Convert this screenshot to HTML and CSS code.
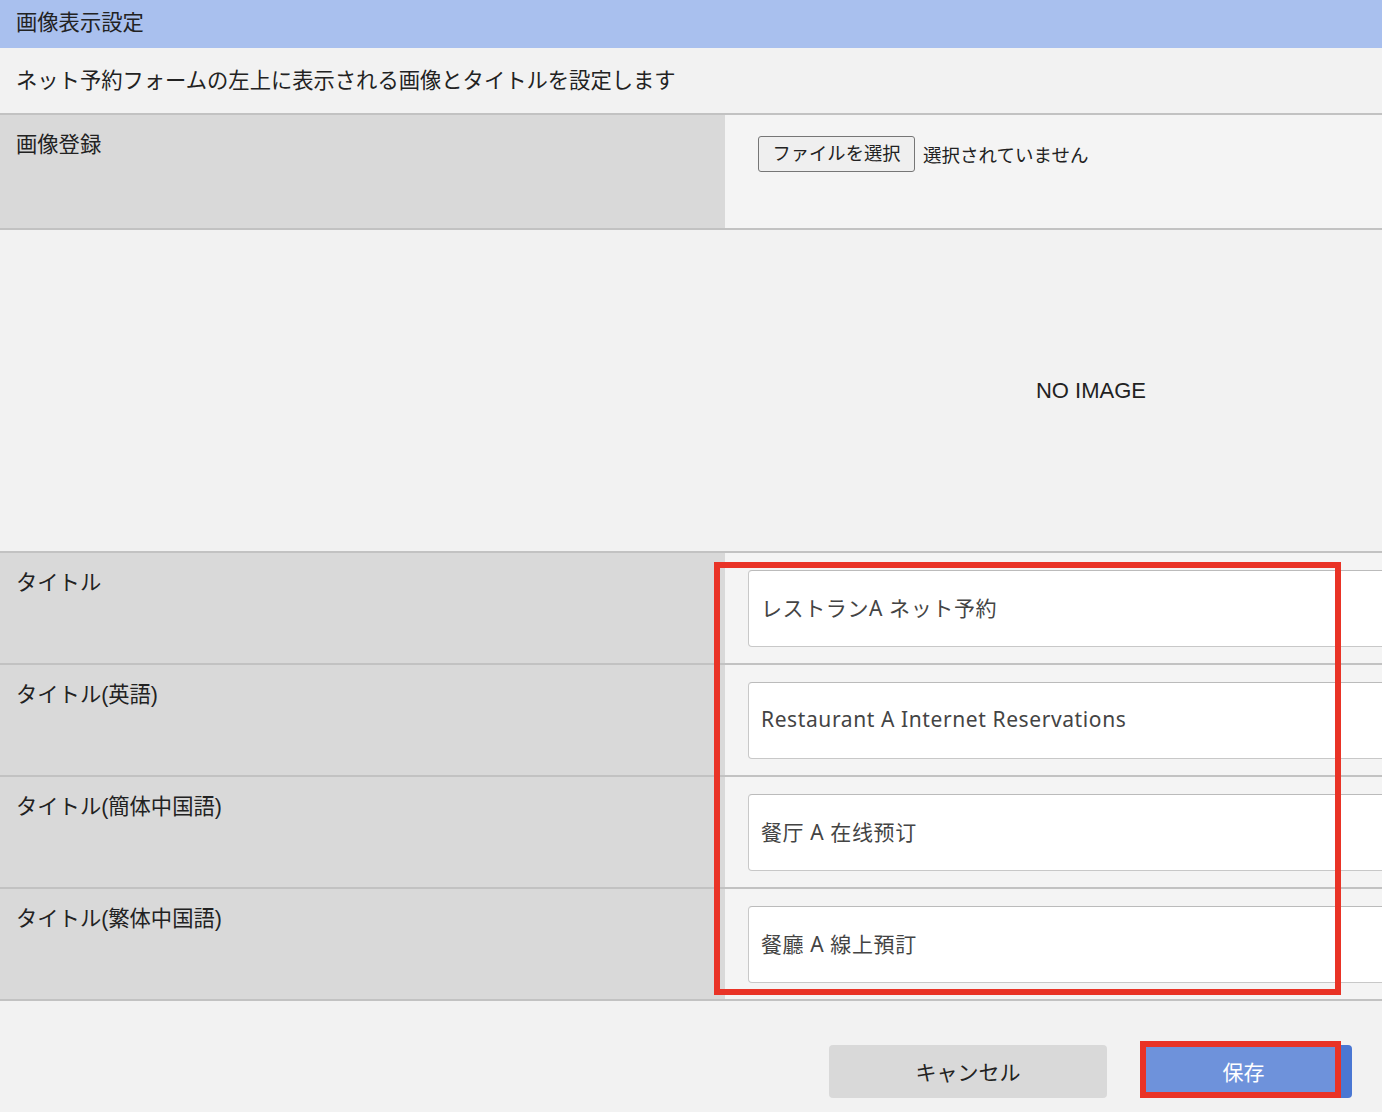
FILE: index.html
```html
<!DOCTYPE html>
<html lang="ja">
<head>
    <meta charset="UTF-8">
    <meta name="viewport" content="width=device-width, initial-scale=1.0">
    <title>画像表示設定</title>
    <link rel="stylesheet" href="styles.css">
</head>
<body>

<div class="page">
    <!-- Header -->
    <div class="panel-title">画像表示設定</div>
    <div class="panel-desc">ネット予約フォームの左上に表示される画像とタイトルを設定します</div>

    <div class="form-table">
        <div class="row row-file">
            <div class="label-cell">画像登録</div>
            <div class="value-cell">
                <label class="file-box">
                    <span class="file-btn">ファイルを選択</span>
                    <span class="file-name">選択されていません</span>
                </label>
            </div>
        </div>

        <div class="row row-image">
            <div class="blank-cell"></div>
            <div class="image-cell">NO IMAGE</div>
        </div>

        <div class="titles">
            <div class="row row-title">
                <div class="label-cell">タイトル</div>
                <div class="value-cell"><input type="text" class="title-input" value="レストランA ネット予約"></div>
            </div>
            <div class="row row-title">
                <div class="label-cell">タイトル(英語)</div>
                <div class="value-cell"><input type="text" class="title-input" value="Restaurant A Internet Reservations"></div>
            </div>
            <div class="row row-title">
                <div class="label-cell">タイトル(簡体中国語)</div>
                <div class="value-cell"><input type="text" class="title-input" value="餐厅 A 在线预订"></div>
            </div>
            <div class="row row-title">
                <div class="label-cell">タイトル(繁体中国語)</div>
                <div class="value-cell"><input type="text" class="title-input" value="餐廳 A 線上預訂"></div>
            </div>

            <!-- annotation box -->
            <div class="mark mark-titles"></div>
        </div>
    </div>

    <div class="footer">
        <button class="btn btn-cancel">キャンセル</button>
        <button class="btn btn-save">保存<span class="mark mark-save"></span></button>
    </div>
</div>

</body>
</html>
```

FILE: styles.css
```css
* {
    box-sizing: border-box;
}
body {
    margin: 0;
    background-color: #f2f2f2;
    color: #222;
    font-family: "Liberation Sans", "Noto Sans CJK JP", sans-serif;
    overflow: hidden;
}
.page {
    width: 1382px;
    overflow: hidden;
}
.panel-title {
    height: 48px;
    background-color: #a9c0ee;
    padding: 0 16px;
    font-size: 21.3px;
    line-height: 46px;
}
.panel-desc {
    height: 67px;
    padding: 0 16px;
    font-size: 21.3px;
    line-height: 66px;
    border-bottom: 2px solid #c2c2c2;
}
.form-table {
    width: 1457px;
}
.row {
    display: grid;
    grid-template-columns: 725px 1fr;
    border-bottom: 2px solid #c2c2c2;
}
.label-cell {
    background-color: #d9d9d9;
    padding: 14px 16px;
    font-size: 21.3px;
    line-height: 32px;
}
.value-cell {
    background-color: #f4f4f4;
}
.row-file {
    height: 115px;
}
.row-file .value-cell {
    padding: 21px 33px;
}
.file-box {
    display: flex;
    align-items: center;
    gap: 8px;
}
.file-btn {
    height: 36px;
    width: 157px;
    border: 1px solid #767676;
    border-radius: 3px;
    background-color: #efefef;
    font-size: 18.3px;
    line-height: 34px;
    text-align: center;
}
.file-name {
    font-size: 18.5px;
}
.row-image {
    height: 323px;
}
.image-cell {
    display: flex;
    align-items: center;
    justify-content: center;
    font-size: 22px;
}
.titles {
    position: relative;
}
.row-title {
    height: 112px;
}
.row-title .value-cell {
    padding: 17px 23px 0;
}
.title-input {
    width: 100%;
    height: 77px;
    border: 1px solid #c8c8c8;
    border-top-color: #bbb;
    border-radius: 4px;
    background-color: #fff;
    padding: 0 12px 4px;
    font-family: "Noto Sans", "Noto Sans CJK JP", sans-serif;
    font-size: 21px;
    letter-spacing: 0.6px;
    color: #444;
}
.footer {
    height: 111px;
    display: flex;
    justify-content: flex-end;
    align-items: flex-start;
    gap: 33px;
    padding: 44px 30px 0 0;
}
.btn {
    height: 53px;
    border: none;
    border-radius: 4px;
    padding-bottom: 3px;
    font-family: inherit;
    font-size: 21px;
}
.btn-cancel {
    width: 278px;
    background-color: #d9d9d9;
    color: #222;
}
.btn-save {
    position: relative;
    width: 212px;
    background-color: #4a77d3;
    color: #fff;
    padding-right: 11px;
}
/* red annotation frames */
.mark {
    position: absolute;
    border: 6px solid #e93326;
    pointer-events: none;
}
.mark-titles {
    left: 714px;
    top: 9px;
    width: 627px;
    height: 433px;
}
.mark-save {
    left: 0;
    top: -4px;
    width: 201px;
    height: 57px;
    background-color: rgba(255, 255, 255, 0.2);
}
```
